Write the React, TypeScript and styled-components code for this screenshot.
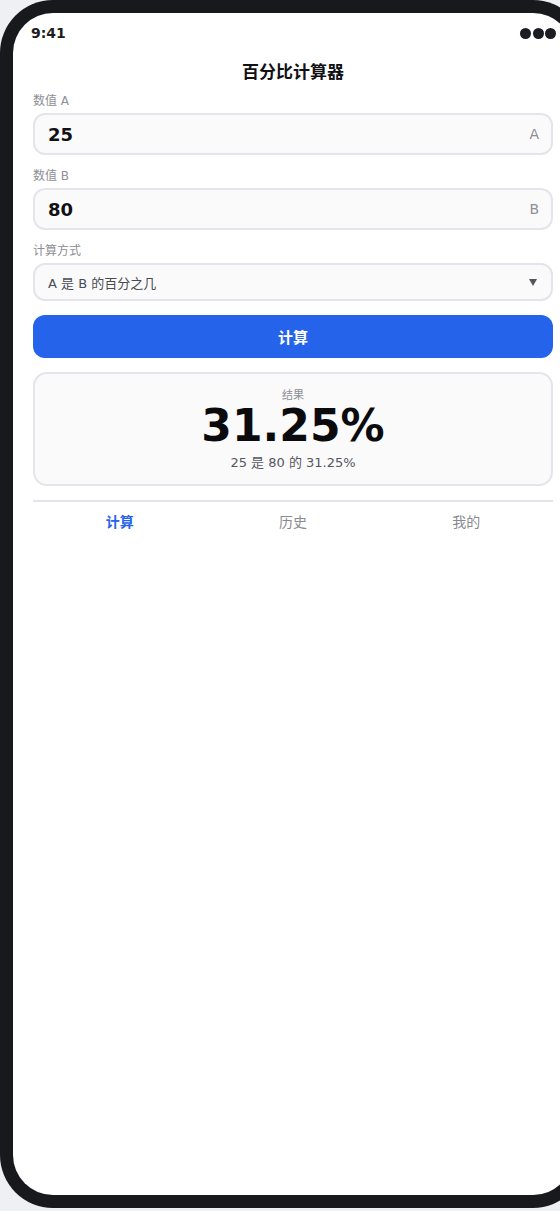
import React, { useState } from 'react';
import styled, { createGlobalStyle } from 'styled-components';

const GlobalStyle = createGlobalStyle`
  html, body {
    margin: 0;
    padding: 0;
    overflow: hidden;
    background: #eff0f4;
  }
  * {
    box-sizing: border-box;
  }
  body {
    font-family: "DejaVu Sans", "Noto Sans CJK SC", sans-serif;
  }
`;

const Frame = styled.div`
  width: 586px;
  height: 1208px;
  padding: 13px;
  border-radius: 53px;
  background: #18191d;
`;

const Screen = styled.div`
  height: 100%;
  border-radius: 40px;
  background: #ffffff;
  overflow: hidden;
  display: flex;
  flex-direction: column;
`;

const StatusBar = styled.div`
  height: 40px;
  padding: 0 17px 0 18px;
  display: flex;
  align-items: center;
  justify-content: space-between;
`;

const Time = styled.span`
  font-size: 14px;
  font-weight: 700;
  color: #1c1d22;
`;

const Dots = styled.div`
  display: flex;
  gap: 1.5px;
`;

const Dot = styled.span`
  width: 11px;
  height: 11px;
  border-radius: 50%;
  background: #1c1d22;
`;

const Header = styled.div`
  height: 34px;
  display: flex;
  align-items: center;
  justify-content: center;
`;

const Title = styled.h1`
  margin: 0;
  font-size: 17px;
  font-weight: 700;
  color: #111114;
`;

const Content = styled.div`
  padding: 6px 20px 0;
  display: flex;
  flex-direction: column;
`;

const Group = styled.div<{ $gap?: number }>`
  display: flex;
  flex-direction: column;
  margin-top: ${(p) => p.$gap ?? 0}px;
`;

const Label = styled.label`
  font-size: 12px;
  line-height: 16px;
  color: #8e8e96;
  margin-bottom: 4px;
`;

const InputBox = styled.div`
  height: 42px;
  border: 2px solid #e4e4ea;
  border-radius: 12px;
  background: #fafafb;
  display: flex;
  align-items: center;
  padding: 0 12px 0 13px;
`;

const ValueInput = styled.input`
  flex: 1;
  min-width: 0;
  border: none;
  outline: none;
  background: transparent;
  padding: 0;
  font-family: "DejaVu Sans", "Noto Sans CJK SC", sans-serif;
  font-size: 18px;
  font-weight: 700;
  color: #111114;
`;

const Suffix = styled.span`
  font-size: 14px;
  color: #8e8e96;
`;

const SelectBox = styled.div`
  height: 38px;
  border: 2px solid #e4e4ea;
  border-radius: 12px;
  background: #fafafb;
  display: flex;
  align-items: center;
  justify-content: space-between;
  padding: 0 12px 0 13px;
  font-size: 13px;
  color: #4a4b52;
`;

const Arrow = styled.span`
  width: 0;
  height: 0;
  border-left: 4px solid transparent;
  border-right: 4px solid transparent;
  border-top: 7px solid #55565c;
  margin-right: 2px;
`;

const Button = styled.button`
  margin-top: 14px;
  height: 43px;
  border: none;
  border-radius: 12px;
  background: #2563eb;
  color: #ffffff;
  font-family: "DejaVu Sans", "Noto Sans CJK SC", sans-serif;
  font-size: 15px;
  font-weight: 700;
  cursor: pointer;
`;

const ResultCard = styled.div`
  margin-top: 14px;
  border: 2px solid #e4e4ea;
  border-radius: 14px;
  background: #fafafb;
  padding: 14px 16px 12px;
  display: flex;
  flex-direction: column;
  align-items: center;
`;

const ResultLabel = styled.div`
  font-size: 11px;
  line-height: 16px;
  color: #8e8e96;
`;

const ResultValue = styled.div`
  font-size: 44px;
  line-height: 44px;
  font-weight: 700;
  color: #0b0b0d;
`;

const ResultText = styled.div`
  margin-top: 6px;
  font-size: 13px;
  line-height: 18px;
  color: #55575e;
`;

const TabBar = styled.nav`
  margin-top: 14px;
  border-top: 2px solid #e4e4ea;
  padding-top: 10px;
  display: grid;
  grid-template-columns: repeat(3, 1fr);
`;

const Tab = styled.div<{ $active?: boolean }>`
  text-align: center;
  font-size: 14px;
  line-height: 20px;
  font-weight: ${(p) => (p.$active ? 700 : 400)};
  color: ${(p) => (p.$active ? '#2563eb' : '#8a8a92')};
  cursor: pointer;
`;

const tabs = ['计算', '历史', '我的'];

const App: React.FC = () => {
  const [a, setA] = useState('25');
  const [b, setB] = useState('80');
  const [active, setActive] = useState(0);

  const na = parseFloat(a) || 0;
  const nb = parseFloat(b) || 0;
  const pct = nb ? `${Math.round((na / nb) * 10000) / 100}%` : '—';

  return (
    <>
      <GlobalStyle />
      <Frame>
        <Screen>
          <StatusBar>
            <Time>9:41</Time>
            <Dots>
              <Dot />
              <Dot />
              <Dot />
            </Dots>
          </StatusBar>
          <Header>
            <Title>百分比计算器</Title>
          </Header>
          <Content>
            <Group>
              <Label>数值 A</Label>
              <InputBox>
                <ValueInput value={a} onChange={(e) => setA(e.target.value)} />
                <Suffix>A</Suffix>
              </InputBox>
            </Group>
            <Group $gap={13}>
              <Label>数值 B</Label>
              <InputBox>
                <ValueInput value={b} onChange={(e) => setB(e.target.value)} />
                <Suffix>B</Suffix>
              </InputBox>
            </Group>
            <Group $gap={13}>
              <Label>计算方式</Label>
              <SelectBox>
                <span>A 是 B 的百分之几</span>
                <Arrow />
              </SelectBox>
            </Group>
            <Button>计算</Button>
            <ResultCard>
              <ResultLabel>结果</ResultLabel>
              <ResultValue>{pct}</ResultValue>
              <ResultText>
                {a} 是 {b} 的 {pct}
              </ResultText>
            </ResultCard>
            <TabBar>
              {tabs.map((t, i) => (
                <Tab key={t} $active={i === active} onClick={() => setActive(i)}>
                  {t}
                </Tab>
              ))}
            </TabBar>
          </Content>
        </Screen>
      </Frame>
    </>
  );
};

export default App;
